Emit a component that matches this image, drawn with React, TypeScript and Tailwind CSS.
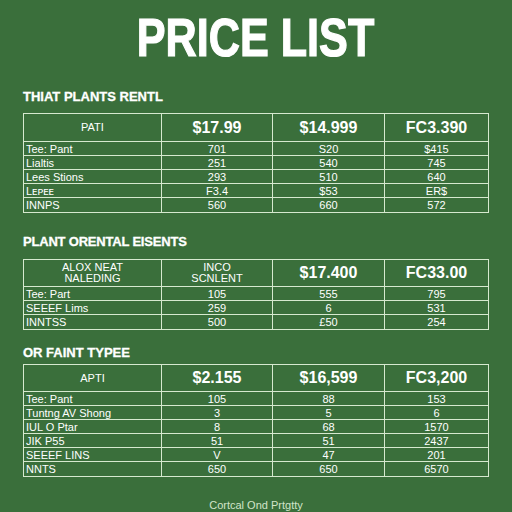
type Row = string[];

type TableProps = {
  head: Row;
  rows: Row[];
  headH: string;
};

const cols = "grid grid-cols-[138px_111px_112px_1fr]";

const PriceTable = ({ head, rows, headH }: TableProps) => {
  return (
    <div className="border-[1.5px] border-[#d6e9cf]">
      <div className={`${cols} ${headH} border-b-[1.5px] border-[#d6e9cf]`}>
        {head.map((h, i) => (
          <div
            key={i}
            className={`flex items-center justify-center text-center ${
              i < 3 ? "border-r-[1.5px] border-[#d6e9cf]" : ""
            } ${
              h.startsWith("$") || h.startsWith("FC")
                ? "text-[16px] font-bold"
                : "text-[11px] leading-[11px] whitespace-pre-line"
            }`}
          >
            {h}
          </div>
        ))}
      </div>
      {rows.map((r, ri) => (
        <div
          key={ri}
          className={`${cols} h-[14px] text-[11px] leading-[12px] ${
            ri < rows.length - 1 ? "border-b-[1.5px] border-[#d6e9cf]" : ""
          }`}
        >
          {r.map((c, ci) => (
            <div
              key={ci}
              className={`flex items-center ${
                ci === 0 ? "pl-[2px]" : "justify-center"
              } ${ci < 3 ? "border-r-[1.5px] border-[#d6e9cf]" : ""}`}
            >
              {c}
            </div>
          ))}
        </div>
      ))}
    </div>
  );
};

const App = () => {
  return (
    <div
      className="w-[512px] h-[512px] overflow-hidden bg-[#3a6f3b] text-white px-[23px] pt-[10px]"
      style={{ fontFamily: '"Liberation Sans", Arial, sans-serif' }}
    >
      <div className="flex justify-center">
        <h1 className="text-[54px] leading-none font-bold scale-x-[0.8] [-webkit-text-stroke:1.2px_white]">
          PRICE LIST
        </h1>
      </div>

      <div className="mt-[26px] text-[13px] leading-none font-bold [-webkit-text-stroke:0.3px_white]">
        THIAT PLANTS RENTL
      </div>
      <div className="mt-[10px]">
        <PriceTable
          headH="h-[28px]"
          head={["PATI", "$17.99", "$14.999", "FC3.390"]}
          rows={[
            ["Tee: Pant", "701", "S20", "$415"],
            ["Lialtis", "251", "540", "745"],
            ["Lees Stions", "293", "510", "640"],
            ["Lᴇᴘᴇᴇ", "F3.4", "$53", "ER$"],
            ["INNPS", "560", "660", "572"],
          ]}
        />
      </div>

      <div className="mt-[22px] text-[13px] leading-none font-bold tracking-[-0.2px] [-webkit-text-stroke:0.3px_white]">
        PLANT ORENTAL EISENTS
      </div>
      <div className="mt-[11px]">
        <PriceTable
          headH="h-[27px]"
          head={["ALOX NEAT\nNALEDING", "INCO\nSCNLENT", "$17.400", "FC33.00"]}
          rows={[
            ["Tee: Part", "105", "555", "795"],
            ["SEEEF Lims", "259", "6", "531"],
            ["INNTSS", "500", "£50", "254"],
          ]}
        />
      </div>

      <div className="mt-[16px] text-[13px] leading-none font-bold [-webkit-text-stroke:0.3px_white]">
        OR FAINT TYPEE
      </div>
      <div className="mt-[5px]">
        <PriceTable
          headH="h-[27px]"
          head={["APTI", "$2.155", "$16,599", "FC3,200"]}
          rows={[
            ["Tee: Pant", "105", "88", "153"],
            ["Tuntng AV Shong", "3", "5", "6"],
            ["IUL O Ptar", "8", "68", "1570"],
            ["JIK P55", "51", "51", "2437"],
            ["SEEEF LINS", "V", "47", "201"],
            ["NNTS", "650", "650", "6570"],
          ]}
        />
      </div>

      <div className="mt-[23px] text-center text-[11px] leading-none text-[#d2e4c9]">
        Cortcal Ond Prtgtty
      </div>
    </div>
  );
};

export default App;
